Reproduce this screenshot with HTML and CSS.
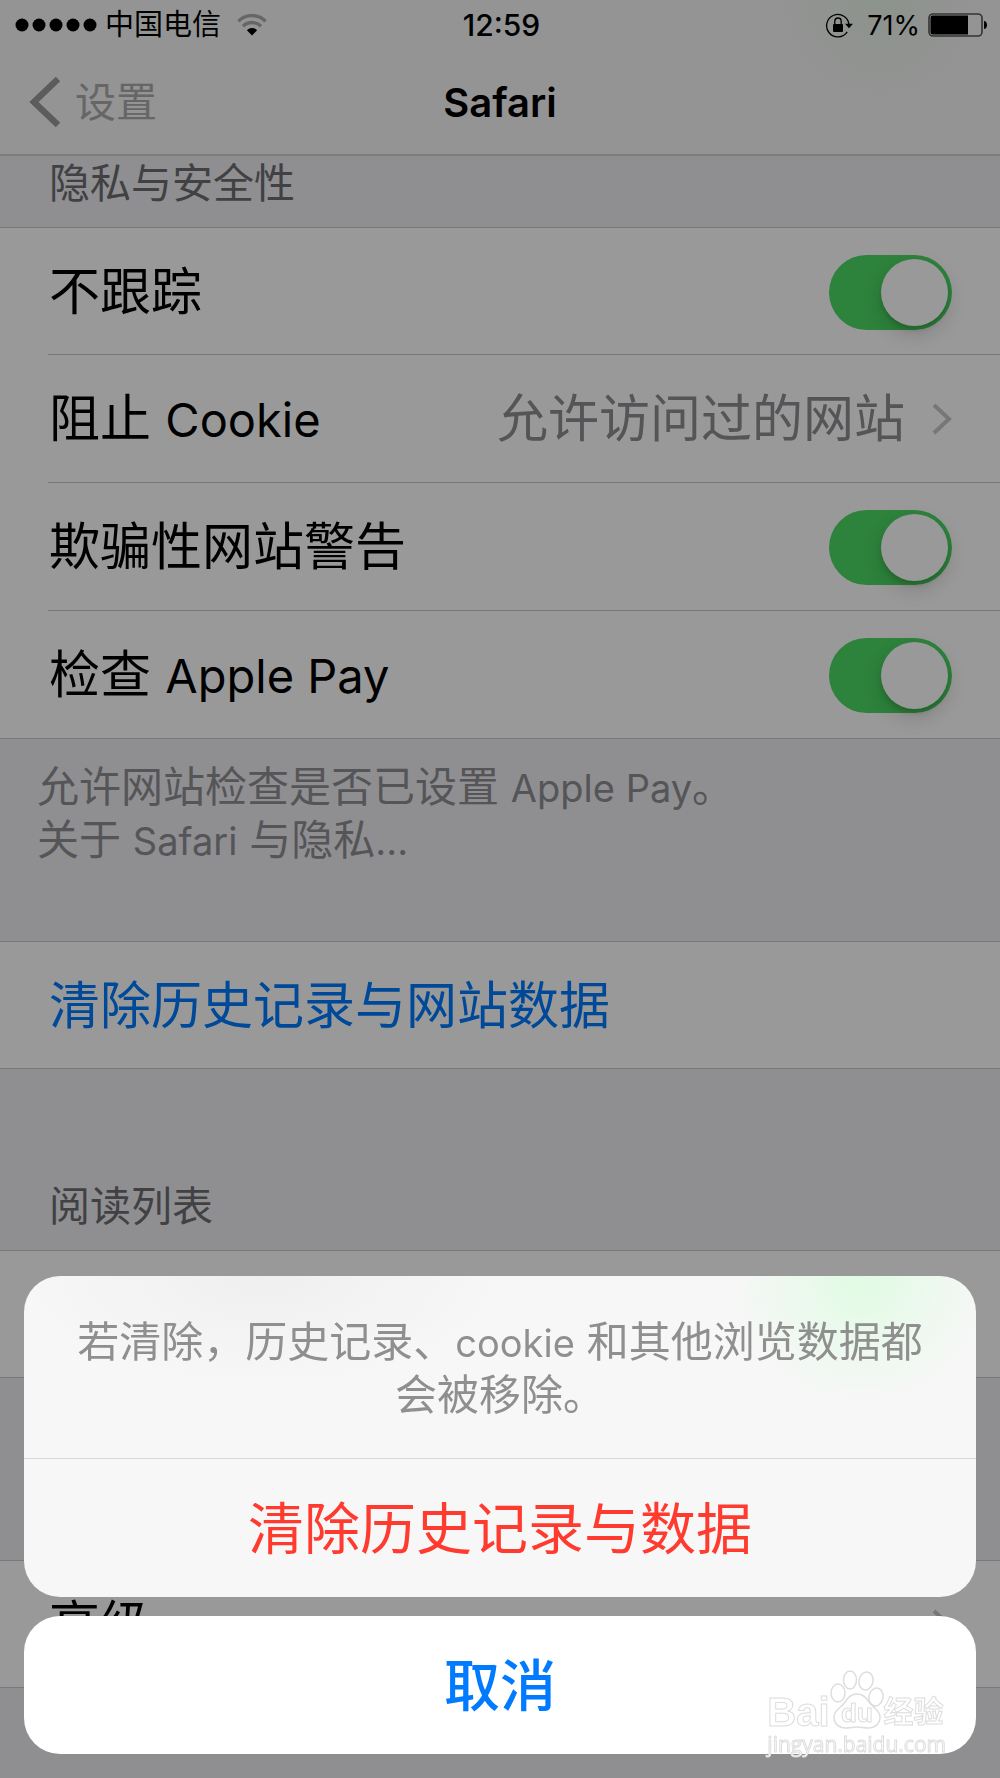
FILE: index.html
```html
<!doctype html>
<html lang="zh-CN">
  <head>
    <meta charset="utf-8">
    <meta name="viewport" content="width=device-width, initial-scale=1">
    <title>Safari</title>
    <link rel="stylesheet" href="styles.css">
  </head>
  <body>
    <header class="topbar">
      <div class="status">
        <div class="status-left">
          <svg class="signal" viewBox="0 0 82 14" width="82" height="14">
            <circle cx="7" cy="7" r="6.5"/><circle cx="24" cy="7" r="6.5"/><circle cx="41" cy="7" r="6.5"/><circle cx="58" cy="7" r="6.5"/><circle cx="75" cy="7" r="6.5"/>
          </svg>
          <span class="carrier">中国电信</span>
          <svg class="wifi" viewBox="0 0 30 22" width="30" height="22">
            <path d="M1.4 7.2a19.3 19.3 0 0 1 27.2 0" fill="none" stroke="#aaa" stroke-width="3.4"/>
            <path d="M6 12.2a12.8 12.8 0 0 1 18 0" fill="none" stroke="#aaa" stroke-width="3.4"/>
            <path d="M15 21.6 9.9 16.2a7.2 7.2 0 0 1 10.2 0z"/>
          </svg>
        </div>
        <span class="clock">12:59</span>
        <div class="status-right">
          <svg class="lock" viewBox="0 0 28 26" width="28" height="26">
            <path d="M22.2 19.8A11.2 11.2 0 1 1 24 13" fill="none" stroke="#000" stroke-width="1.3"/>
            <path d="M20 11.8h8l-4 4.4z"/>
            <rect x="8" y="12" width="10" height="8" rx="1"/>
            <path d="M9.8 12.5V9.2a3.2 3.2 0 0 1 6.4 0v3.3" fill="none" stroke="#000" stroke-width="1.3"/>
          </svg>
          <span class="percent">71%</span>
          <svg class="battery" viewBox="0 0 60 24" width="60" height="24">
            <rect x="1" y="1" width="53" height="22" rx="4" fill="none" stroke="#555" stroke-width="1.6"/>
            <path d="M4.5 2.5H40v19H4.5a2 2 0 0 1-2-2v-15a2 2 0 0 1 2-2z"/>
            <path d="M56 8c2 0 3 2 3 4s-1 4-3 4z"/>
          </svg>
        </div>
      </div>
      <nav class="nav">
        <a class="back" href="#">
          <svg viewBox="0 0 32 52" width="32" height="52"><path d="M29 3 5 26l24 23" fill="none" stroke="#999" stroke-width="6.5"/></svg>
          设置
        </a>
        <h1>Safari</h1>
      </nav>
    </header>

    <main>
      <h2 class="group-title">隐私与安全性</h2>
      <ul class="group">
        <li><label class="row">不跟踪<input class="switch" type="checkbox" checked></label></li>
        <li>
          <a class="row" href="#">
            <span>阻止 <span class="latin">Cookie</span></span>
            <span class="value">允许访问过的网站</span>
            <svg class="chevron" viewBox="0 0 20 32" width="20" height="32"><path d="M2 2l15 14L2 30" fill="none" stroke="#c7c7cc" stroke-width="4"/></svg>
          </a>
        </li>
        <li><label class="row">欺骗性网站警告<input class="switch" type="checkbox" checked></label></li>
        <li><label class="row"><span>检查 <span class="latin">Apple Pay</span></span><input class="switch" type="checkbox" checked></label></li>
      </ul>
      <p class="group-note">
        允许网站检查是否已设置 <span class="latin">Apple Pay</span>。<br>
        <a href="#">关于 <span class="latin">Safari</span> 与隐私<span class="latin">...</span></a>
      </p>

      <ul class="group">
        <li><button class="row clear" type="button">清除历史记录与网站数据</button></li>
      </ul>

      <h2 class="group-title spaced">阅读列表</h2>
      <ul class="group">
        <li><div class="row"></div></li>
      </ul>

      <ul class="group advanced">
        <li>
          <a class="row" href="#">
            <span>高级</span>
            <svg class="chevron" viewBox="0 0 20 32" width="20" height="32"><path d="M2 2l15 14L2 30" fill="none" stroke="#c7c7cc" stroke-width="4"/></svg>
          </a>
        </li>
      </ul>
    </main>

    <div class="scrim"></div>

    <div class="sheet" role="dialog" aria-modal="true" aria-describedby="sheet-message">
      <div class="sheet-card">
        <p class="sheet-message" id="sheet-message">若清除，历史记录、<span class="latin">cookie</span> 和其他浏览数据都会被移除。</p>
        <button class="sheet-btn danger" type="button">清除历史记录与数据</button>
      </div>
      <button class="sheet-btn cancel" type="button">取消</button>
    </div>

    <div class="watermark">
      <div class="watermark-logo">
        <span>Bai</span>
        <svg viewBox="0 0 54 60" width="54" height="60">
          <g fill="#fff" stroke="#ddd" stroke-width="1.5">
            <ellipse cx="8" cy="23" rx="7" ry="9"/>
            <ellipse cx="20" cy="10" rx="6.5" ry="9"/>
            <ellipse cx="36" cy="11" rx="7" ry="9" transform="rotate(12 36 11)"/>
            <ellipse cx="46" cy="27" rx="7" ry="9" transform="rotate(12 46 27)"/>
            <path d="M27 24c6 0 9 3 12 8 4 6 11 8 11 15 0 7-5 11-12 11-4 0-7-1-11-1s-7 1-11 1C9 58 4 54 4 47c0-7 7-9 11-15 3-5 6-8 12-8z"/>
          </g>
          <text class="watermark-du" x="27" y="52" text-anchor="middle">du</text>
        </svg>
        <span class="watermark-cn">经验</span>
      </div>
      <div class="watermark-url">jingyan.baidu.com</div>
    </div>
  </body>
</html>
```

FILE: styles.css
```css
* {
  box-sizing: border-box;
}

body {
  margin: 0;
  background: #efeff4;
  color: #000;
  font-family: Inter, "Noto Sans CJK SC", sans-serif;
  font-size: 51px;
}

h1, h2, p, ul {
  margin: 0;
  padding: 0;
  font-weight: 400;
}

ul {
  list-style: none;
}

a {
  color: inherit;
  text-decoration: none;
}

button {
  border: none;
  background: none;
  font: inherit;
  cursor: pointer;
}

svg {
  display: block;
  flex: none;
}

.latin {
  font-size: 47px;
  line-height: 1;
}

/* status bar + navigation */
.topbar {
  height: 156px;
  border-bottom: 2px solid #d0d0d2;
  background: radial-gradient(circle at 88% 0, #ebf5eb, #f7f7f7 110px) #f7f7f7;
}

.status {
  display: grid;
  grid-template-columns: 1fr auto 1fr;
  align-items: center;
  height: 50px;
  padding: 0 12px 0 15px;
}

.status-left, .status-right {
  display: flex;
  align-items: center;
}

.status-right {
  justify-content: flex-end;
}

.carrier {
  margin: 0 16px 0 8px;
  font-size: 29px;
  line-height: 50px;
}

.clock {
  font-size: 30px;
  font-weight: 500;
}

.percent {
  margin: 0 8px 0 14px;
  font-size: 27px;
}

.nav {
  display: grid;
  grid-template-columns: 1fr auto 1fr;
  align-items: center;
  height: 104px;
  padding: 0 29px;
}

.nav h1 {
  font-size: 40px;
  font-weight: 600;
}

.back {
  display: flex;
  align-items: center;
  gap: 14px;
  color: #aaa;
  font-size: 41px;
  line-height: 52px;
}

/* settings groups */
.group-title {
  padding: 1px 49px 18px;
  color: #6d6d72;
  font-size: 41px;
  line-height: 52px;
}

.group-title.spaced {
  padding-top: 111px;
}

.group {
  border-top: 1px solid #c8c7cc;
  border-bottom: 1px solid #c8c7cc;
  background: #fff;
}

.group li {
  padding-left: 48px;
}

.group li + li {
  background: linear-gradient(#c8c7cc, #c8c7cc) 48px 0 / 100% 1px no-repeat;
}

.row {
  display: flex;
  align-items: center;
  justify-content: space-between;
  width: 100%;
  height: 128px;
  padding: 2px 48px 0 1px;
  line-height: 64px;
}

.group li:first-child .row {
  height: 126px;
}

.value {
  margin-left: auto;
  padding-right: 27px;
  color: #8e8e93;
}

.clear {
  color: #007aff;
}

.group-note {
  padding: 21px 37px 75px;
  color: #8e8e93;
  font-size: 42px;
  line-height: 53px;
}

.group-note .latin, .sheet-message .latin {
  font-size: 38px;
}

.advanced {
  margin-top: 182px;
}

.switch {
  appearance: none;
  width: 123px;
  height: 75px;
  margin: 0;
  padding: 4px;
  border-radius: 38px;
  background: #ccc;
}

.switch::before {
  content: "";
  display: block;
  width: 67px;
  height: 67px;
  border-radius: 50%;
  background: #fff;
  box-shadow: 0 8px 20px rgba(0, 0, 0, 0.16), 0 4px 4px rgba(0, 0, 0, 0.12);
}

.switch:checked {
  background: #4cd964;
}

.switch:checked::before {
  margin-left: auto;
}

/* action sheet */
.scrim {
  position: fixed;
  inset: 0;
  background: rgba(0, 0, 0, 0.4);
}

.sheet {
  position: fixed;
  right: 24px;
  bottom: 24px;
  left: 24px;
  display: flex;
  flex-direction: column;
  gap: 19px;
}

.sheet-card {
  overflow: hidden;
  border-radius: 36px;
  background:
    radial-gradient(circle at 88% 0, #e0fbe3, rgba(224, 251, 227, 0) 130px),
    radial-gradient(ellipse at 25% 0, #efefef, rgba(239, 239, 239, 0) 240px),
    #f7f7f7;
}

.sheet-message {
  padding: 39px 40px 37px;
  border-bottom: 1px solid #d8d8da;
  color: #8f8f8f;
  font-size: 42px;
  line-height: 53px;
  text-align: center;
}

.sheet-btn {
  display: block;
  width: 100%;
  height: 138px;
  padding: 2px 0 0;
  font-size: 56px;
  line-height: 72px;
}

.danger {
  color: #ff3b30;
}

.cancel {
  border-radius: 36px;
  background: #fff;
  color: #007aff;
  font-weight: 500;
}

/* corner mark */
.watermark {
  position: fixed;
  right: 54px;
  bottom: 20px;
  color: #fff;
  font-family: "Liberation Sans", "Noto Sans CJK SC", sans-serif;
  -webkit-text-stroke: 1px #ddd;
  pointer-events: none;
}

.watermark-logo {
  display: flex;
  align-items: flex-end;
  font-size: 40px;
  font-weight: 700;
  line-height: 36px;
}

.watermark-cn {
  font-size: 30px;
}

.watermark-du {
  fill: #fff;
  stroke: #ddd;
  font-size: 26px;
}

.watermark-url {
  font-family: "Open Sans", sans-serif;
  font-size: 21px;
  line-height: 28px;
}
```
